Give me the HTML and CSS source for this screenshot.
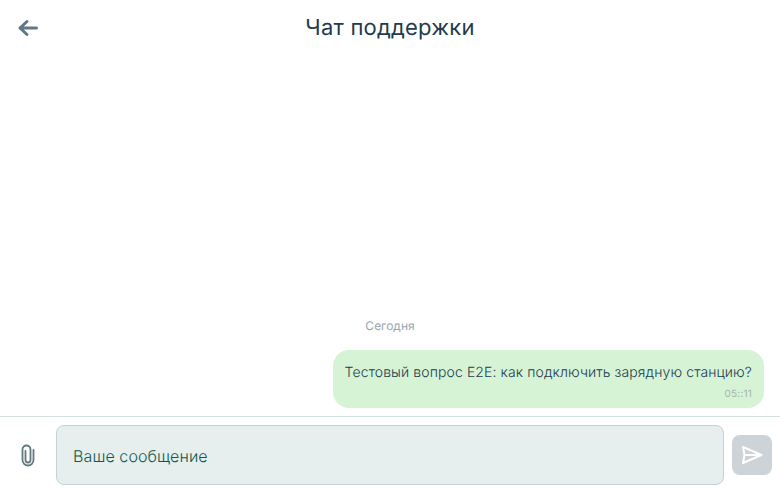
FILE: index.html
```html
<!DOCTYPE html>
<html lang="ru">
<head>
  <meta charset="UTF-8" />
  <meta name="viewport" content="width=device-width, initial-scale=1.0"/>
  <title>Чат поддержки</title>
  <link rel="stylesheet" href="styles.css">
</head>
<body>
  <div class="chat">
    <header class="topbar">
      <button type="button" class="back" aria-label="Назад">
        <svg width="24" height="24" viewBox="0 0 24 24" fill="none" stroke="#5f7887" stroke-width="3" stroke-linecap="round" stroke-linejoin="round">
          <path d="M20.500 12H4M11 5.500L4 12l7 6.500"/>
        </svg>
      </button>
      <h1>Чат поддержки</h1>
    </header>

    <main class="messages">
      <div class="day">Сегодня</div>
      <div class="bubble">
        <p>Тестовый вопрос E2E: как подключить зарядную станцию?</p>
        <span class="time">05::11</span>
      </div>
    </main>

    <footer class="composer">
      <button type="button" class="attach" aria-label="Прикрепить">
        <svg width="24" height="24" viewBox="0 0 24 24" fill="none" stroke="#62787f" stroke-width="1.8" stroke-linecap="round" stroke-linejoin="round">
          <path d="M9.500 8v9a2.500 2.500 0 0 0 5 0V6.500a4 4 0 0 0-8 0V17a5.500 5.500 0 0 0 11 0V7"/>
        </svg>
      </button>
      <div class="input">Ваше сообщение</div>
      <button type="button" class="send" aria-label="Отправить">
        <svg width="24" height="24" viewBox="0 0 24 24" fill="none" stroke="#fff" stroke-width="2" stroke-linejoin="round">
          <path d="M3 4L21.500 12 3 20l1.500-8z"/>
          <path d="M4.500 12h17" />
        </svg>
      </button>
    </footer>
  </div>
</body>
</html>
```

FILE: styles.css
```css
* {
  box-sizing: border-box;
}
body {
  margin: 0;
  font-family: Inter, "Noto Sans", sans-serif;
  text-rendering: geometricPrecision;
  color: #243b4d;
  background: #fff;
}
button {
  border: none;
  background: none;
  padding: 0;
  display: flex;
  align-items: center;
  justify-content: center;
}
.chat {
  height: 493px;
  display: flex;
  flex-direction: column;
}
.topbar {
  height: 56px;
  display: flex;
  align-items: center;
  justify-content: center;
  position: relative;
}
.topbar h1 {
  margin: 0;
  font-size: 22px;
  font-weight: 400;
  letter-spacing: 0.22px;
  color: #243b4d;
}
.back {
  position: absolute;
  left: 16px;
  top: 16px;
}
.messages {
  flex: 1;
  display: flex;
  flex-direction: column;
  justify-content: flex-end;
  padding: 0 16px 8px;
}
.day {
  text-align: center;
  font-size: 12px;
  color: #9aa6af;
  line-height: 16px;
  margin-bottom: 16px;
}
.bubble {
  align-self: flex-end;
  background: #d6f3d6;
  border-radius: 16px;
  padding: 12px 12px 8px;
}
.bubble p {
  margin: 0;
  font-size: 14px;
  font-weight: 300;
  letter-spacing: 0.11px;
  line-height: 21px;
  color: #243b4d;
}
.time {
  display: block;
  text-align: right;
  font-size: 10px;
  letter-spacing: 0.2px;
  line-height: 12px;
  margin-top: 5px;
  color: #a3b3ab;
}
.composer {
  height: 77px;
  border-top: 1px solid #d3e2e0;
  display: flex;
  align-items: flex-start;
  padding: 8px 8px 8px 16px;
}
.attach {
  width: 24px;
  height: 24px;
  margin-top: 18px;
}
.input {
  flex: 1;
  height: 60px;
  margin-left: 16px;
  padding: 2px 16px 0;
  display: flex;
  align-items: center;
  background: #e6eeee;
  border: 1px solid #c6d2d3;
  border-radius: 8px;
  font-size: 16px;
  font-weight: 300;
  letter-spacing: 0.1px;
  color: #0c5a4f;
}
.send {
  width: 40px;
  height: 40px;
  margin: 10px 0 0 8px;
  background: #cdd3d6;
  border-radius: 8px;
}
```
